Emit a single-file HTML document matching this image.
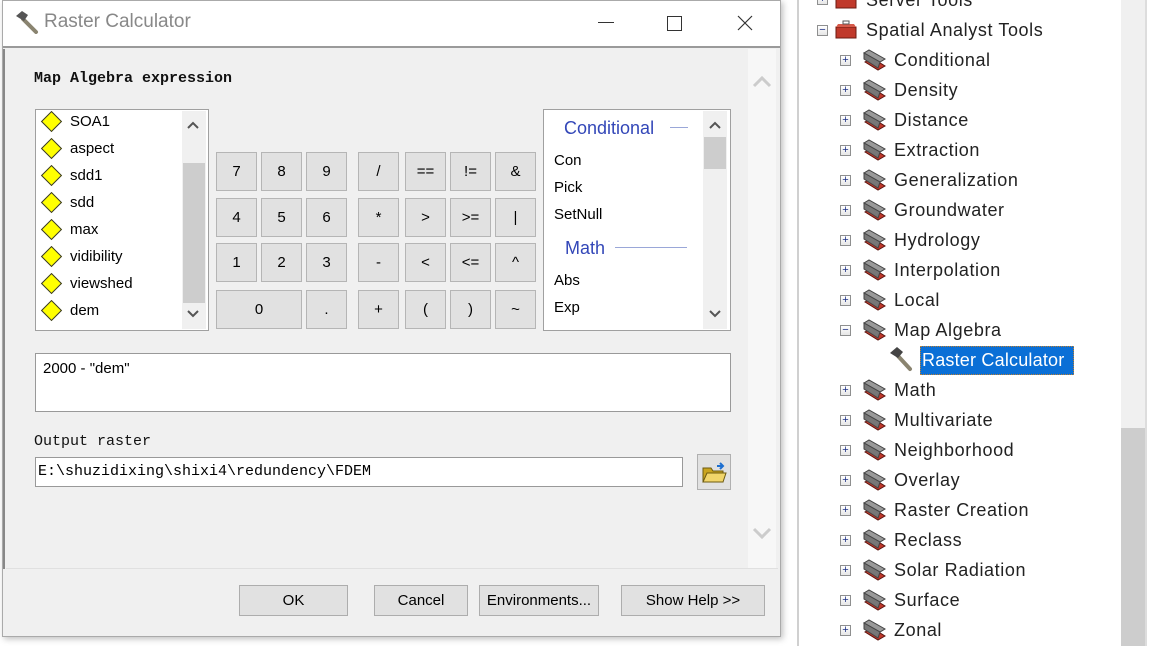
<!DOCTYPE html>
<html><head><meta charset="utf-8"><style>
*{margin:0;padding:0;box-sizing:border-box}
body{width:1149px;height:646px;background:#fff;position:relative;overflow:hidden;font-family:"Liberation Sans","Noto Sans CJK SC",sans-serif}
.a{position:absolute}
.btn{position:absolute;background:#e1e1e1;border:1px solid #adadad;font-size:15px;color:#000;display:flex;align-items:center;justify-content:center}
.k{position:absolute;background:#e1e1e1;border:1px solid #b5b5b5;font-size:15px;display:flex;align-items:center;justify-content:center;width:41px;height:39px}
.mono{font-family:"Liberation Mono","Noto Serif CJK SC",monospace}
.it{position:absolute;left:8px;font-size:15px;height:27px;line-height:27px;padding-left:26px}
.dia{position:absolute;left:0;top:6px;width:15px;height:15px;background:#ffff00;border:1.5px solid #333;transform:rotate(45deg)}
.tr{position:absolute;font-size:18px;color:#222;height:30px;line-height:30px;letter-spacing:0.6px;font-family:"Liberation Sans","Noto Sans CJK SC",sans-serif}
.ex{position:absolute;width:11px;height:11px;border:1px solid #8e8f8f;background:linear-gradient(#fff,#e6e6e6);font-size:11px;line-height:8px;text-align:center;color:#1e3287}
.fl{position:absolute;left:10px;font-size:15px}
</style></head><body>
<div class="a" style="left:2px;top:0;width:779px;height:637px;border:1px solid #aaa;background:#f0f0f0;box-shadow:2px 2px 6px rgba(0,0,0,.25)"></div>
<div class="a" style="left:3px;top:1px;width:777px;height:47px;background:#fff;border-bottom:2px solid #9a9a9a"></div>
<svg class="a" style="left:14px;top:10px" width="26" height="24" viewBox="0 0 26 24"><path d="M9 9 L22 22" stroke="#8a8470" stroke-width="4" stroke-linecap="round"/><path d="M2 6 L8 1 L14 5 L10 11 Z" fill="#555"/></svg>
<div class="a" style="left:44px;top:11px;font-size:19px;color:#888">Raster Calculator</div>
<div class="a" style="left:598px;top:22px;width:16px;height:1px;background:#333"></div>
<div class="a" style="left:667px;top:16px;width:15px;height:15px;border:1px solid #333"></div>
<svg class="a" style="left:737px;top:15px" width="16" height="16"><path d="M1 1L15 15M15 1L1 15" stroke="#333" stroke-width="1.2"/></svg>
<div class="a" style="left:3px;top:49px;width:2px;height:520px;background:#888"></div>
<div class="a" style="left:748px;top:49px;width:28px;height:520px;background:#f7f7f7"></div>
<div class="a" style="left:6px;top:568px;width:772px;height:1px;background:#e0e0e0"></div>
<svg class="a" style="left:752px;top:74px" width="20" height="14"><path d="M2 12L10 4L18 12" stroke="#ccc" stroke-width="3" fill="none"/></svg>
<svg class="a" style="left:752px;top:527px" width="20" height="14"><path d="M2 2L10 10L18 2" stroke="#ccc" stroke-width="3" fill="none"/></svg>
<div class="a mono" style="left:34px;top:70px;font-size:15px;font-weight:bold;color:#111">Map Algebra expression</div>
<div class="a" style="left:35px;top:109px;width:174px;height:222px;background:#fff;border:1px solid #a0a0a0;overflow:hidden">
 <div class="a" style="left:146px;top:1px;width:24px;height:218px;background:#f0f0f0"></div>
 <div class="a" style="left:147px;top:53px;width:22px;height:140px;background:#cdcdcd"></div>
 <svg class="a" style="left:150px;top:10px" width="14" height="10"><path d="M2 8L7 3L12 8" stroke="#555" stroke-width="2" fill="none"/></svg>
 <svg class="a" style="left:150px;top:199px" width="14" height="10"><path d="M2 2L7 7L12 2" stroke="#555" stroke-width="2" fill="none"/></svg>
 <div class="it" style="top:-2px"><span class="dia"></span>SOA1</div>
 <div class="it" style="top:25px"><span class="dia"></span>aspect</div>
 <div class="it" style="top:52px"><span class="dia"></span>sdd1</div>
 <div class="it" style="top:79px"><span class="dia"></span>sdd</div>
 <div class="it" style="top:106px"><span class="dia"></span>max</div>
 <div class="it" style="top:133px"><span class="dia"></span>vidibility</div>
 <div class="it" style="top:160px"><span class="dia"></span>viewshed</div>
 <div class="it" style="top:187px"><span class="dia"></span>dem</div>
</div>
<div class="k" style="left:216px;top:152px">7</div><div class="k" style="left:261px;top:152px">8</div><div class="k" style="left:306px;top:152px">9</div>
<div class="k" style="left:358px;top:152px">/</div><div class="k" style="left:405px;top:152px">==</div><div class="k" style="left:450px;top:152px">!=</div><div class="k" style="left:495px;top:152px">&amp;</div>
<div class="k" style="left:216px;top:198px">4</div><div class="k" style="left:261px;top:198px">5</div><div class="k" style="left:306px;top:198px">6</div>
<div class="k" style="left:358px;top:198px">*</div><div class="k" style="left:405px;top:198px">&gt;</div><div class="k" style="left:450px;top:198px">&gt;=</div><div class="k" style="left:495px;top:198px">|</div>
<div class="k" style="left:216px;top:243px">1</div><div class="k" style="left:261px;top:243px">2</div><div class="k" style="left:306px;top:243px">3</div>
<div class="k" style="left:358px;top:243px">-</div><div class="k" style="left:405px;top:243px">&lt;</div><div class="k" style="left:450px;top:243px">&lt;=</div><div class="k" style="left:495px;top:243px">^</div>
<div class="k" style="left:216px;top:290px;width:86px">0</div><div class="k" style="left:306px;top:290px">.</div>
<div class="k" style="left:358px;top:290px">+</div><div class="k" style="left:405px;top:290px">(</div><div class="k" style="left:450px;top:290px">)</div><div class="k" style="left:495px;top:290px">~</div>
<div class="a" style="left:543px;top:109px;width:188px;height:222px;background:#fff;border:1px solid #a0a0a0;overflow:hidden">
 <div class="a" style="left:159px;top:1px;width:24px;height:218px;background:#f0f0f0"></div>
 <div class="a" style="left:160px;top:27px;width:22px;height:32px;background:#cdcdcd"></div>
 <svg class="a" style="left:164px;top:10px" width="14" height="10"><path d="M2 8L7 3L12 8" stroke="#555" stroke-width="2" fill="none"/></svg>
 <svg class="a" style="left:164px;top:199px" width="14" height="10"><path d="M2 2L7 7L12 2" stroke="#555" stroke-width="2" fill="none"/></svg>
 <div class="a" style="left:20px;top:8px;font-size:18px;color:#3347b8">Conditional</div>
 <div class="a" style="left:126px;top:17px;width:18px;height:1px;background:#9aa7d8"></div>
 <div class="fl" style="top:42px">Con</div>
 <div class="fl" style="top:69px">Pick</div>
 <div class="fl" style="top:96px">SetNull</div>
 <div class="a" style="left:21px;top:128px;font-size:18px;color:#3347b8">Math</div>
 <div class="a" style="left:71px;top:137px;width:72px;height:1px;background:#9aa7d8"></div>
 <div class="fl" style="top:162px">Abs</div>
 <div class="fl" style="top:189px">Exp</div>
</div>
<div class="a" style="left:35px;top:353px;width:696px;height:59px;background:#fff;border:1px solid #999"></div>
<div class="a" style="left:43px;top:360px;font-size:15px">2000 - "dem"</div>
<div class="a mono" style="left:34px;top:433px;font-size:15px;color:#111">Output raster</div>
<div class="a mono" style="left:35px;top:457px;width:648px;height:30px;background:#fff;border:1px solid #999;font-size:15px;line-height:27px;padding-left:2px">E:\shuzidixing\shixi4\redundency\FDEM</div>
<div class="a" style="left:697px;top:454px;width:34px;height:36px;background:#e1e1e1;border:1px solid #b0b0b0"></div>
<svg class="a" style="left:701px;top:460px" width="26" height="24"><path d="M2 8h8l2 3h10v11H2z" fill="#c9a41e" stroke="#6d5a10"/><path d="M2 22l4-9h19l-3 9z" fill="#f1d56a" stroke="#6d5a10"/><path d="M16 6h6M19 3l3 3-3 3" stroke="#1d6fd0" stroke-width="2" fill="none"/></svg>
<div class="btn" style="left:239px;top:585px;width:109px;height:31px">OK</div>
<div class="btn" style="left:374px;top:585px;width:94px;height:31px">Cancel</div>
<div class="btn" style="left:479px;top:585px;width:120px;height:31px">Environments...</div>
<div class="btn" style="left:621px;top:585px;width:144px;height:31px">Show Help &gt;&gt;</div>
<div class="a" style="left:797px;top:0;width:2px;height:646px;background:#d0d0d0"></div>
<div class="a" style="left:1121px;top:0;width:24px;height:646px;background:#f0f0f0"></div>
<div class="a" style="left:1121px;top:428px;width:24px;height:218px;background:#cdcdcd"></div>
<div class="a" style="left:1145px;top:0;width:2px;height:646px;background:#ddd"></div>
<div id="tree"></div>
<svg class="a" style="left:888px;top:346px" width="28" height="26"><path d="M10 10 L22 23" stroke="#8a8470" stroke-width="4" stroke-linecap="round"/><path d="M2 7 L9 1 L15 6 L10 12 Z" fill="#444"/></svg>
<div class="a" style="left:920px;top:346px;width:154px;height:29px;background:#0a6fd6;border:1px dotted #c08030"></div>
<div class="tr" style="left:922px;top:345px;color:#fff;letter-spacing:0.2px">Raster Calculator</div>
<script>
var t=document.getElementById('tree'),h='';
function box(x,y,red){return '<svg class="a" style="left:'+x+'px;top:'+y+'px" width="26" height="24" viewBox="0 0 26 24">'+(red?'<path d="M3 9h20v11H3z" fill="#c0392b" stroke="#6b1a10"/><path d="M5 6h16l2 3H3z" fill="#d65a4a"/><rect x="10" y="3" width="6" height="3" fill="none" stroke="#555"/>':'<path d="M4 14 L17 22 L24 18 L11 10Z" fill="#c0392b" stroke="#5a1510"/><path d="M3 5 L19 14 L24 11 L8 2Z" fill="#999" stroke="#444"/><path d="M3 5 L3 11 L17 20 L19 14Z" fill="#777" stroke="#444"/>')+'</svg>';}
function ex(x,y,m){return '<div class="ex" style="left:'+x+'px;top:'+y+'px">'+(m?'−':'+')+'</div>';}
h+=ex(817,-6,0)+box(833,-12,1)+'<div class="tr" style="left:866px;top:-15px">Server Tools</div>';
h+=ex(817,25,1)+box(833,18,1)+'<div class="tr" style="left:866px;top:15px">Spatial Analyst Tools</div>';
var L=['Conditional','Density','Distance','Extraction','Generalization','Groundwater','Hydrology','Interpolation','Local','Map Algebra',null,'Math','Multivariate','Neighborhood','Overlay','Raster Creation','Reclass','Solar Radiation','Surface','Zonal'];
for(var i=0;i<L.length;i++){if(!L[i])continue;var y=45+i*30;h+=ex(840,y+10,L[i]=='Map Algebra')+box(861,y+3,0)+'<div class="tr" style="left:894px;top:'+y+'px">'+L[i]+'</div>';}
t.innerHTML=h;
</script>
</body></html>
